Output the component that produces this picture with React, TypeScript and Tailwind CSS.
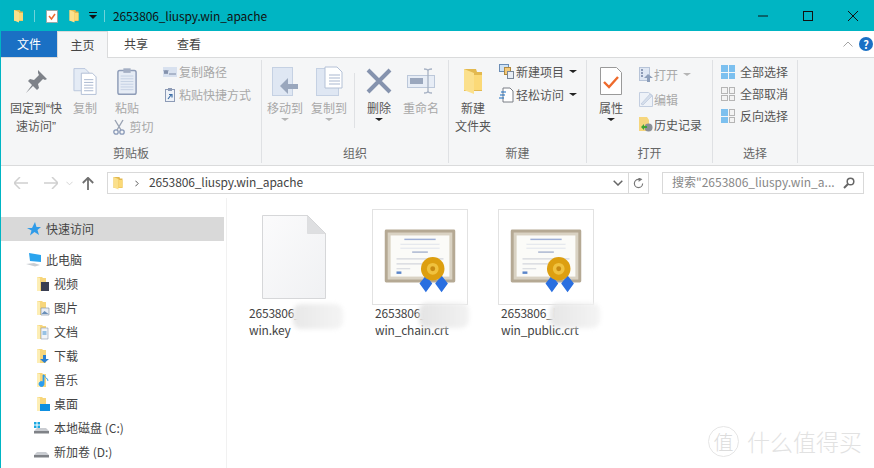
import React from "react";

const Folder = ({ className = "" }: { className?: string }) => (
  <svg viewBox="0 0 20 28" className={className}>
    <path d="M1 2h12l1 3h5v19H1z" fill="#e3b94f" />
    <path d="M1 2l10 4v21L1 23z" fill="#fbe08c" />
    <path d="M11 8h8v15H11z" fill="#fbd977" />
  </svg>
);

const Pin = () => (
  <svg viewBox="0 0 24 24" className="w-[24px] h-[24px]">
    <path d="M14 1l9 9-2 1-2-1-5 5 1 4-2 2-4-4-7 7 6-8-4-4 2-2 4 1 5-5-1-2z" fill="#7e8289" />
  </svg>
);
const CopyBig = () => (
  <svg viewBox="0 0 26 30" className="w-[24px] h-[29px]">
    <path d="M1 1h12l4 4v20H1z" fill="#e4ebf5" stroke="#b9c6dc" />
    <path d="M9 6h12l4 4v19H9z" fill="#fff" stroke="#aebcd4" />
    <path d="M12 13h10M12 16h10M12 19h10M12 22h10M12 25h10" stroke="#a5b4cd" />
  </svg>
);
const Paste = () => (
  <svg viewBox="0 0 22 30" className="w-[20px] h-[29px]">
    <rect x="1" y="3" width="20" height="26" rx="2" fill="#e6ecf5" stroke="#8e9cb7" strokeWidth="1.6" />
    <rect x="7" y="0.5" width="8" height="5" fill="#a4afc4" />
    <path d="M4 9h14M4 12h14M4 15h14M4 18h14M4 21h14M4 24h14" stroke="#c3cfe2" />
  </svg>
);
const Scissors = () => (
  <svg viewBox="0 0 12 16" className="w-[12px] h-[16px]">
    <path d="M2 1l6 10M10 1L4 11" stroke="#9aa3b3" strokeWidth="1.4" fill="none" />
    <circle cx="3" cy="13" r="2.2" fill="none" stroke="#8a9ab8" strokeWidth="1.3" />
    <circle cx="9" cy="13" r="2.2" fill="none" stroke="#8a9ab8" strokeWidth="1.3" />
  </svg>
);
const PathIcon = () => (
  <svg viewBox="0 0 14 10" className="w-[14px] h-[10px]">
    <rect width="14" height="10" fill="#d8e1ef" />
    <path d="M1 3l1 4 1-4 1 4 1-4M6 7h7" stroke="#7c8aa6" fill="none" />
  </svg>
);
const ShortcutIcon = () => (
  <svg viewBox="0 0 10 14" className="w-[10px] h-[14px]">
    <rect x="0.5" y="1.5" width="9" height="12" fill="#eef2f8" stroke="#8d9bb6" />
    <rect x="3" y="0" width="4" height="3" fill="#8d9bb6" />
    <path d="M3 11l3-4M4 6.500h3v3" stroke="#3f6fa8" fill="none" strokeWidth="1.2" />
  </svg>
);
const MoveTo = () => (
  <svg viewBox="0 0 27 29" className="w-[27px] h-[29px]">
    <rect x="0.500" y="0.500" width="20" height="28" fill="#dfe7f3" stroke="#c5d1e3" />
    <path d="M26 17h-10v-6l-8 8 8 8v-5h10z" fill="#9aa7bd" />
  </svg>
);
const CopyTo = () => (
  <svg viewBox="0 0 27 30" className="w-[27px] h-[30px]">
    <rect x="0.500" y="2.500" width="22" height="27" fill="#dfe7f3" stroke="#c5d1e3" />
    <path d="M9 1h12l5 5v16H9z" fill="#fff" stroke="#b4c1d6" />
    <path d="M13 9h11M13 12h11M13 15h11M13 18h11" stroke="#a9b7cf" />
  </svg>
);
const Delete = () => (
  <svg viewBox="0 0 26 26" className="w-[26px] h-[26px]">
    <path d="M2 2l22 22M24 2L2 24" stroke="#8593ae" strokeWidth="4" />
  </svg>
);
const Rename = () => (
  <svg viewBox="0 0 29 26" className="w-[29px] h-[26px]">
    <rect x="0.500" y="7.500" width="27" height="12" fill="#e7edf6" stroke="#bcc8da" />
    <rect x="3" y="10" width="13" height="6" fill="#9aa7bd" />
    <path d="M17 1c2 0 4 0 4 2v20c0 2-2 2-4 2M25 1c-2 0-4 0-4 2v20c0 2 2 2 4 2" stroke="#a7b2c4" strokeWidth="1.3" fill="none" />
  </svg>
);
const NewItem = () => (
  <svg viewBox="0 0 15 15" className="w-[15px] h-[15px]">
    <rect x="0.500" y="0.500" width="9" height="7" fill="#cfe2f5" stroke="#6b8db5" />
    <rect x="5.500" y="3.500" width="6" height="7" fill="#f4c97a" stroke="#b08a3f" />
    <rect x="8.500" y="7.500" width="6" height="7" fill="#e9eef5" stroke="#7b8798" />
  </svg>
);
const EasyAccess = () => (
  <svg viewBox="0 0 15 16" className="w-[15px] h-[16px]">
    <path d="M4 1h7l3 3v11H4z" fill="#fff" stroke="#7b7f86" />
    <path d="M2 5h5M1 8h5M0 11h5" stroke="#1b6fc2" strokeWidth="1.2" />
  </svg>
);
const Props = () => (
  <svg viewBox="0 0 22 28" className="w-[22px] h-[28px]">
    <path d="M0.500 0.500h16l5 5v22h-21z" fill="#fff" stroke="#9a9a9a" />
    <path d="M4 15l5 5 9-10" stroke="#ee6a2c" strokeWidth="2.4" fill="none" />
  </svg>
);
const OpenIcon = () => (
  <svg viewBox="0 0 14 15" className="w-[14px] h-[15px]">
    <rect x="0.500" y="0.500" width="10" height="13" fill="#dfe7f3" stroke="#b7c4d8" />
    <path d="M2 3h2M2 6h2M2 9h2" stroke="#8d9bb6" strokeWidth="2" />
    <path d="M9 7l5 4h-3v4H8v-4H5z" fill="#8d9fbb" />
  </svg>
);
const EditIcon = () => (
  <svg viewBox="0 0 14 15" className="w-[14px] h-[15px]">
    <path d="M0.500 0.500h9l4 3v11h-13z" fill="#eef2f8" stroke="#c3cee0" />
    <path d="M2 12l9-10 2 2-9 9z" fill="#d5deeb" stroke="#b6c3d8" strokeWidth="0.6" />
  </svg>
);
const History = () => (
  <svg viewBox="0 0 14 15" className="w-[14px] h-[15px]">
    <path d="M0 0h8l2 3v11H0z" fill="#f6d67d" />
    <circle cx="9.500" cy="10.500" r="4" fill="#8b8f96" />
    <path d="M2 10l3-3v2h3v2H5v2z" fill="#3fa535" />
  </svg>
);
const Grid = ({ cells }: { cells: [string, string, string, string] }) => (
  <span className="grid grid-cols-2 gap-[1px] w-[14px] h-[14px] shrink-0">
    {cells.map((c, i) => (
      <span key={i} className={c === "b" ? "bg-[#7cc0ef]" : "border border-[#b5b5b5] bg-[#f3f3f3]"} />
    ))}
  </span>
);

const Big = ({
  w,
  icon,
  lines,
  dim,
  caret,
  children,
}: {
  w: string;
  icon: React.ReactNode;
  lines: React.ReactNode[];
  dim?: boolean;
  caret?: "grey" | "dark";
  children?: React.ReactNode;
}) => (
  <div className={`${w} flex flex-col items-center shrink-0`}>
    <div className="h-[39px] flex items-center justify-center pt-[3px]">{icon}</div>
    {lines.map((l, i) => (
      <div key={i} className={`h-[18px] leading-[18px] whitespace-nowrap ${dim ? "text-[#a8a8a8]" : "text-[#555]"}`}>
        {l}
      </div>
    ))}
    {caret && (
      <div
        className={`w-0 h-0 mt-[1px] border-x-[4px] border-x-transparent border-t-[3px] ${
          caret === "grey" ? "border-t-[#b5b5b5]" : "border-t-[#222]"
        }`}
      />
    )}
    {children}
  </div>
);

const Small = ({
  icon,
  text,
  dim,
  caret,
  h,
  gap,
}: {
  icon: React.ReactNode;
  text: string;
  dim?: boolean;
  caret?: "grey" | "dark";
  h: string;
  gap: string;
}) => (
  <div className={`${h} flex items-center whitespace-nowrap`}>
    <span className={`${gap} flex justify-center shrink-0`}>{icon}</span>
    <span className={dim ? "text-[#a8a8a8]" : "text-[#555]"}>{text}</span>
    {caret && (
      <span
        className={`ml-[5px] w-0 h-0 border-x-[4px] border-x-transparent border-t-[3px] ${
          caret === "grey" ? "border-t-[#b5b5b5]" : "border-t-[#222]"
        }`}
      />
    )}
  </div>
);

const Group = ({ w, label, children }: { w: string; label: string; children: React.ReactNode }) => (
  <div className={`${w} shrink-0 h-full flex flex-col border-r border-[#dfe1e4]`}>
    <div className="flex-1 flex min-h-0">{children}</div>
    <div className="h-[18px] leading-[18px] text-center text-[#666] mb-[1px]">{label}</div>
  </div>
);

const NavFolderBadge = ({ kind }: { kind: string }) => {
  const badge: Record<string, React.ReactNode> = {
    video: <path d="M5 6h8v9H5z" fill="#3a3f52" />,
    pic: (
      <>
        <path d="M5 8h8v7H5z" fill="#e9eef5" stroke="#7a8aa0" strokeWidth="0.6" />
        <path d="M5.500 14l3-3 4 3z" fill="#6a8fb8" />
      </>
    ),
    doc: (
      <>
        <path d="M5 4h7v11H5z" fill="#f1f4f8" stroke="#8d9bb0" strokeWidth="0.6" />
        <path d="M6.500 8h4M6.500 10h4" stroke="#3f8fd0" />
      </>
    ),
    down: <path d="M7 7h3v4h3l-4.500 4L4 11h3z" fill="#2a7fd0" />,
    music: <path d="M8 3v9a2.500 2.500 0 1 1-1-2V3zM8 3c1 3 4 3 4 6" fill="#2a9df0" stroke="#2a9df0" strokeWidth="0.8" />,
    desk: <path d="M4 8h10v7H4z" fill="#0f8fe0" />,
  };
  return (
    <svg viewBox="0 0 14 16" className="w-[14px] h-[16px] shrink-0">
      <path d="M1 1h5l1 1h3v13H1z" fill="#f7d67c" />
      <path d="M1 1l3 1v13H1z" fill="#fdeeb5" />
      {badge[kind]}
    </svg>
  );
};

const Drive = ({ win }: { win?: boolean }) => (
  <svg viewBox="0 0 16 14" className="w-[16px] h-[14px] shrink-0">
    {win && <path d="M1 1h2.500v2.500H1zM4.500 1H7v2.500H4.500zM1 4.500h2.500V7H1zM4.500 4.500H7V7H4.500z" fill="#19a7e0" />}
    <path d="M1 10l3-3h9l3 3v2H1z" fill="#c9ccd1" />
    <path d="M1 10h15v2.500H1z" fill="#7f8287" />
  </svg>
);

const NavRow = ({ icon, text, sub }: { icon: React.ReactNode; text: string; sub?: boolean }) => (
  <div className={`h-[24px] flex items-center gap-[4px] ${sub ? "pl-[35px]" : "pl-[25px]"}`}>
    {icon}
    <span className="text-[#444] whitespace-nowrap">{text}</span>
  </div>
);

const Cert = () => (
  <svg viewBox="0 0 96 96" className="w-[94px] h-[94px] blur-[0.6px]">
    <rect x="12" y="20" width="72" height="54" rx="1.500" fill="#b5a994" />
    <rect x="15" y="23" width="66" height="48" fill="#d9d2c3" />
    <rect x="18" y="26" width="60" height="42" fill="#fbfbf8" />
    <path d="M32 30h32" stroke="#9fb0d8" strokeWidth="1.500" />
    <path d="M28 35h40M28 39h40" stroke="#dfe3ec" />
    <path d="M40 43h16" stroke="#a9b5d0" strokeWidth="1.500" />
    <path d="M24 50h48M24 55h26M24 60h14" stroke="#d4d6dc" strokeWidth="1.200" />
    <path d="M24 64h5" stroke="#5c86c9" strokeWidth="2.500" />
    <path d="M54 67l6.500 8-6.500 9-6.500-9zM70 67l6.500 8-6.500 9-6.500-9z" fill="#2a6fe0" />
    <circle cx="61" cy="60" r="12" fill="#dd9f10" />
    <circle cx="61" cy="60" r="6" fill="#f0c23e" />
    <circle cx="61" cy="60" r="2.500" fill="#c98a10" />
  </svg>
);

const Blank = () => (
  <svg viewBox="0 0 64 84" className="w-[64px] h-[84px]">
    <defs>
      <linearGradient id="pg" x1="0" y1="0" x2="1" y2="1">
        <stop offset="0" stopColor="#fbfbfc" />
        <stop offset="1" stopColor="#f0f1f3" />
      </linearGradient>
    </defs>
    <path d="M0.500 0.500h45l18 18v65h-63z" fill="url(#pg)" stroke="#d6d7d9" />
    <path d="M45.500 0.500v18h18z" fill="#dedfe1" stroke="#d0d1d3" strokeWidth="0.500" />
  </svg>
);

const FileItem = ({ thumb, framed, l1, l2 }: { thumb: React.ReactNode; framed?: boolean; l1: string; l2: string }) => (
  <div className="w-[126px] shrink-0">
    <div
      className={`w-[96px] h-[96px] flex items-center justify-center border ${
        framed ? "border-[#e2e2e2]" : "border-transparent"
      }`}
    >
      {thumb}
    </div>
    <div className="pl-[3px] mt-[-1px] text-[#444] tracking-[-0.2px]">
      <div className="h-[17px] leading-[18px] whitespace-nowrap">{l1}</div>
      <div className="h-[18px] leading-[18px] whitespace-nowrap">{l2}</div>
    </div>
  </div>
);

export default function App() {
  return (
    <div className="relative w-[874px] h-[468px] overflow-hidden bg-white border-l border-[#00b5c4] text-[12px] [font-family:'Noto_Sans_CJK_SC','Liberation_Sans',sans-serif]">
      {/* Title bar */}
      <div className="h-[31px] bg-[#00b5c3] flex items-center">
        <Folder className="ml-[12px] w-[11px] h-[14px]" />
        <span className="ml-[10px] w-[1px] h-[12px] bg-[#6fd3da]" />
        <svg viewBox="0 0 12 14" className="ml-[11px] w-[12px] h-[14px]">
          <path d="M0.500 1.500h11v12h-11z" fill="#fff" stroke="#9aa" />
          <path d="M3 7l2.500 3L9 5" stroke="#ec6a2c" strokeWidth="1.500" fill="none" />
        </svg>
        <Folder className="ml-[11px] w-[10px] h-[14px]" />
        <svg viewBox="0 0 8 7" className="ml-[10px] w-[8px] h-[7px]">
          <path d="M0 0h8v1H0zM0 3h8L4 7z" fill="#111" />
        </svg>
        <span className="ml-[7px] w-[1px] h-[12px] bg-[#6fd3da]" />
        <span className="ml-[8px] text-[#111] whitespace-nowrap tracking-[-0.12px]">2653806_liuspy.win_apache</span>
        <div className="ml-auto flex items-center pr-[16px] gap-[35px]">
          <svg viewBox="0 0 10 10" className="w-[10px] h-[10px]"><path d="M0 5h10" stroke="#111" /></svg>
          <svg viewBox="0 0 10 10" className="w-[10px] h-[10px]"><rect x="0.500" y="0.500" width="9" height="9" fill="none" stroke="#111" /></svg>
          <svg viewBox="0 0 10 10" className="w-[10px] h-[10px]"><path d="M0 0l10 10M10 0L0 10" stroke="#111" /></svg>
        </div>
      </div>

      {/* Tabs */}
      <div className="h-[27px] flex items-stretch border-b border-[#dadbdc] text-[#444]">
        <div className="w-[56px] h-[26px] bg-[#1a70c4] text-white flex items-center justify-center">文件</div>
        <div className="w-[51px] h-[27px] bg-[#f5f6f7] border-x border-t border-[#dadbdc] flex items-center justify-center">主页</div>
        <div className="w-[56px] flex items-center justify-center">共享</div>
        <div className="w-[50px] flex items-center justify-center">查看</div>
        <div className="ml-auto flex items-center pr-[1px] gap-[6px]">
          <svg viewBox="0 0 10 6" className="w-[10px] h-[6px]"><path d="M0.500 5.500L5 1l4.500 4.500" fill="none" stroke="#a5a5a5" /></svg>
          <span className="w-[14px] h-[14px] rounded-full bg-[#1a70c4] text-white text-[11px] font-bold flex items-center justify-center leading-none">?</span>
        </div>
      </div>

      {/* Ribbon */}
      <div className="h-[108px] bg-[#f5f6f7] border-b border-[#dadbdc] flex pt-[2px] pb-[2px]">
        <Group w="w-[261px]" label="剪贴板">
          <Big
            w="w-[64px] ml-[3px]"
            icon={<Pin />}
            lines={[
              <>固定到<span className="[font-family:'Liberation_Sans',sans-serif]">“</span>快</>,
              <>速访问<span className="[font-family:'Liberation_Sans',sans-serif]">”</span></>,
            ]}
          />
          <Big w="w-[34px]" icon={<CopyBig />} lines={["复制"]} dim />
          <Big w="w-[50px]" icon={<Paste />} lines={["粘贴"]} dim>
            <div className="h-[20px] flex items-center gap-[5px] text-[#a8a8a8] whitespace-nowrap ml-[12px]">
              <Scissors />
              <span>剪切</span>
            </div>
          </Big>
          <div className="ml-[8px]">
            <Small h="h-[23px]" gap="w-[19px]" icon={<PathIcon />} text="复制路径" dim />
            <Small h="h-[23px]" gap="w-[19px]" icon={<ShortcutIcon />} text="粘贴快捷方式" dim />
          </div>
        </Group>
        <Group w="w-[187px]" label="组织">
          <Big w="w-[46px]" icon={<MoveTo />} lines={["移动到"]} dim caret="grey" />
          <Big w="w-[42px]" icon={<CopyTo />} lines={["复制到"]} dim caret="grey" />
          <div className="w-[1px] h-[55px] mt-[13px] ml-[4px] mr-[1px] bg-[#dfe1e4]" />
          <Big w="w-[46px]" icon={<Delete />} lines={["删除"]} caret="dark" />
          <Big w="w-[38px]" icon={<Rename />} lines={["重命名"]} dim />
        </Group>
        <Group w="w-[138px]" label="新建">
          <Big w="w-[48px]" icon={<Folder className="w-[20px] h-[28px]" />} lines={["新建", "文件夹"]} />
          <div>
            <Small h="h-[23px]" gap="w-[19px]" icon={<NewItem />} text="新建项目" caret="dark" />
            <Small h="h-[23px]" gap="w-[19px]" icon={<EasyAccess />} text="轻松访问" caret="dark" />
          </div>
        </Group>
        <Group w="w-[126px]" label="打开">
          <Big w="w-[48px]" icon={<Props />} lines={["属性"]} caret="dark" />
          <div className="pt-[2px] ml-[2px]">
            <Small h="h-[25px]" gap="w-[17px]" icon={<OpenIcon />} text="打开" dim caret="grey" />
            <Small h="h-[25px]" gap="w-[17px]" icon={<EditIcon />} text="编辑" dim />
            <Small h="h-[25px]" gap="w-[17px]" icon={<History />} text="历史记录" />
          </div>
        </Group>
        <Group w="w-[85px]" label="选择">
          <div className="pl-[8px] pt-[1px]">
            <Small h="h-[22px]" gap="w-[19px] justify-start" icon={<Grid cells={["b", "b", "b", "b"]} />} text="全部选择" />
            <Small h="h-[22px]" gap="w-[19px] justify-start" icon={<Grid cells={["g", "g", "g", "g"]} />} text="全部取消" />
            <Small h="h-[22px]" gap="w-[19px] justify-start" icon={<Grid cells={["b", "g", "b", "g"]} />} text="反向选择" />
          </div>
        </Group>
      </div>

      {/* Address row */}
      <div className="h-[32px] flex items-start pt-[6px]">
        <div className="w-[106px] h-[22px] flex items-center pl-[13px] shrink-0">
          <svg viewBox="0 0 14 12" className="w-[14px] h-[12px]"><path d="M6 0L0 6l6 6M0 6h14" fill="none" stroke="#d0d0d0" strokeWidth="1.500" /></svg>
          <svg viewBox="0 0 14 12" className="ml-[16px] w-[14px] h-[12px]"><path d="M8 0l6 6-6 6M14 6H0" fill="none" stroke="#d0d0d0" strokeWidth="1.500" /></svg>
          <svg viewBox="0 0 8 5" className="ml-[8px] w-[7px] h-[5px]"><path d="M0.500 0.500L4 4l3.500-3.500" fill="none" stroke="#d0d0d0" /></svg>
          <svg viewBox="0 0 12 13" className="ml-[9px] w-[12px] h-[13px]"><path d="M0.800 6L6 0.800 11.200 6M6 1v12" fill="none" stroke="#707070" strokeWidth="1.800" /></svg>
        </div>
        <div className="w-[542px] h-[22px] border border-[#d9d9d9] flex items-center">
          <Folder className="ml-[5px] w-[10px] h-[14px]" />
          <svg viewBox="0 0 5 8" className="ml-[12px] w-[4px] h-[7px]"><path d="M0.500 0.500L4 4 0.500 7.500" fill="none" stroke="#555" strokeWidth="1.200" /></svg>
          <span className="ml-[10px] pb-[2px] text-[#444] whitespace-nowrap tracking-[-0.12px]">2653806_liuspy.win_apache</span>
          <svg viewBox="0 0 10 6" className="ml-auto mr-[5px] w-[10px] h-[6px]"><path d="M0.700 0.700L5 5l4.300-4.300" fill="none" stroke="#666" strokeWidth="1.500" /></svg>
          <span className="w-[20px] h-full border-l border-[#d9d9d9] flex items-center justify-center">
            <svg viewBox="0 0 12 12" className="w-[11px] h-[11px]"><path d="M10.500 6A4.500 4.500 0 1 1 6 1.500h2M6 0l3 1.500L6 3.500" fill="none" stroke="#777" strokeWidth="1.300" /></svg>
          </span>
        </div>
        <div className="ml-[13px] w-[202px] h-[22px] border border-[#d9d9d9] flex items-center pl-[9px] text-[#888]">
          <span className="whitespace-nowrap pb-[2px]">搜索"2653806_liuspy.win_a...</span>
          <svg viewBox="0 0 12 12" className="ml-auto mr-[8px] w-[12px] h-[12px]"><circle cx="7.500" cy="4.500" r="3.300" fill="none" stroke="#666" strokeWidth="1.500" /><path d="M5 7l-4 4" stroke="#666" strokeWidth="2" /></svg>
        </div>
      </div>

      {/* Main */}
      <div className="flex h-[270px]">
        <nav className="w-[226px] shrink-0 border-r border-[#f1f1f1] pr-[2px] pt-[19px]">
          <div className="h-[24px] bg-[#d9d9d9] flex items-center pl-[26px] gap-[5px]">
            <svg viewBox="0 0 14 14" className="w-[14px] h-[14px]"><path d="M8 0l1.500 5H14l-3.500 3 1.500 5-4.500-3L3 13.500l1.500-5L0 6h5z" fill="#2f9be8" /></svg>
            <span className="text-[#444]">快速访问</span>
          </div>
          <div className="mt-[7px]">
            <NavRow
              icon={
                <svg viewBox="0 0 16 14" className="w-[16px] h-[14px] shrink-0">
                  <path d="M3 0l12 2v7L4 8z" fill="#2aa4ee" />
                  <path d="M0 11l8-1 6 2-5 1.500z" fill="#c9cdd2" />
                </svg>
              }
              text="此电脑"
            />
            <NavRow sub icon={<NavFolderBadge kind="video" />} text="视频" />
            <NavRow sub icon={<NavFolderBadge kind="pic" />} text="图片" />
            <NavRow sub icon={<NavFolderBadge kind="doc" />} text="文档" />
            <NavRow sub icon={<NavFolderBadge kind="down" />} text="下载" />
            <NavRow sub icon={<NavFolderBadge kind="music" />} text="音乐" />
            <NavRow sub icon={<NavFolderBadge kind="desk" />} text="桌面" />
            <div className="h-[24px] flex items-center pl-[32px] gap-[5px]">
              <Drive win />
              <span className="text-[#444] whitespace-nowrap">本地磁盘 (C:)</span>
            </div>
            <div className="h-[24px] flex items-center pl-[32px] gap-[5px]">
              <Drive />
              <span className="text-[#444] whitespace-nowrap">新加卷 (D:)</span>
            </div>
          </div>
        </nav>
        <main className="flex-1 flex pl-[19px] pt-[11px]">
          <FileItem thumb={<Blank />} l1="2653806_liuspy." l2="win.key" />
          <FileItem framed thumb={<Cert />} l1="2653806_liuspy." l2="win_chain.crt" />
          <FileItem framed thumb={<Cert />} l1="2653806_liuspy." l2="win_public.crt" />
        </main>
      </div>

      {/* Smudges hiding part of the file names */}
      <div className="absolute left-[292px] top-[304px] w-[50px] h-[25px] rounded-[8px] bg-gradient-to-r from-[#e8e8e8] to-[#f4f4f4] blur-[2px]" />
      <div className="absolute left-[418px] top-[303px] w-[50px] h-[25px] rounded-[8px] bg-gradient-to-r from-[#e4e4e4] to-[#f2f2f2] blur-[2px]" />
      <div className="absolute left-[549px] top-[303px] w-[50px] h-[25px] rounded-[8px] bg-gradient-to-r from-[#e6e6e6] to-[#f4f4f4] blur-[2px]" />

      {/* Watermark */}
      <div className="absolute left-[707px] top-[426px] w-[31px] h-[31px] rounded-full border border-[#e6e6e6] flex items-center justify-center text-[20px] text-[#dcdcdc] font-light">值</div>
      <div className="absolute left-[746px] top-[425px] text-[23px] leading-[32px] text-[#e2e2e2] font-light whitespace-nowrap">什么值得买</div>
    </div>
  );
}
